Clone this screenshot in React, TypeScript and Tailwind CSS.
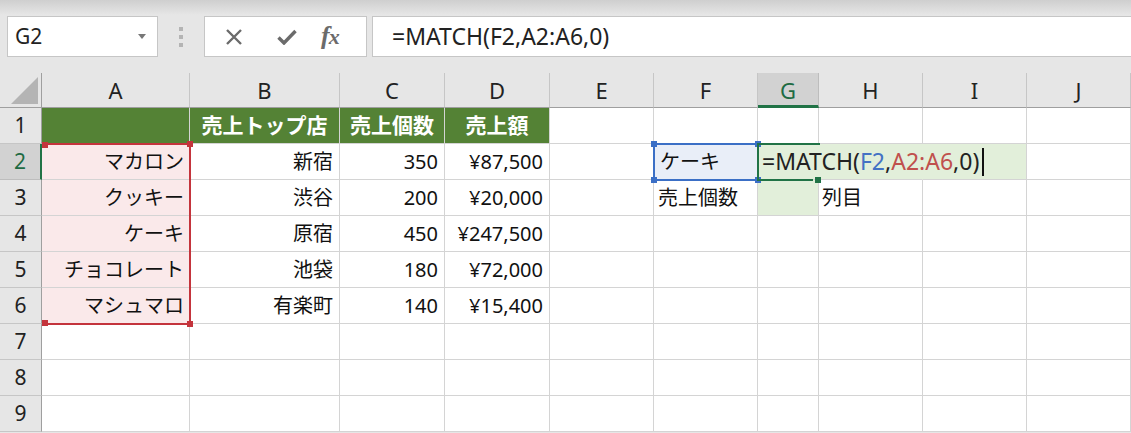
import React from 'react'

const COLS = [
  { l: 'A', w: 148 },
  { l: 'B', w: 150 },
  { l: 'C', w: 105 },
  { l: 'D', w: 105 },
  { l: 'E', w: 104 },
  { l: 'F', w: 104 },
  { l: 'G', w: 61 },
  { l: 'H', w: 104 },
  { l: 'I', w: 104 },
  { l: 'J', w: 104 },
]

const DATA = [
  ['マカロン', '新宿', '350', '¥87,500'],
  ['クッキー', '渋谷', '200', '¥20,000'],
  ['ケーキ', '原宿', '450', '¥247,500'],
  ['チョコレート', '池袋', '180', '¥72,000'],
  ['マシュマロ', '有楽町', '140', '¥15,400'],
]

const font = 'font-["Noto_Sans","Noto_Sans_CJK_JP",sans-serif]'

const Handle = ({ className }: { className: string }) => (
  <span className={`absolute w-[6px] h-[6px] ${className}`} />
)

function FormulaBar() {
  return (
    <div className="flex items-stretch h-[41px] mt-[16px]">
      <div className="ml-[7px] w-[151px] bg-white border border-[#c6c6c6] flex items-center justify-between pl-[7px] pr-[11px]">
        <span className="text-[21px] text-[#222] leading-none">G2</span>
        <svg width="8" height="5" viewBox="0 0 8 5"><path d="M0 0h8L4 5z" fill="#777" /></svg>
      </div>
      <div className="w-[46px] flex flex-col items-center justify-center gap-[4px]">
        <span className="w-[4px] h-[4px] bg-[#b4b4b4]" />
        <span className="w-[4px] h-[4px] bg-[#b4b4b4]" />
        <span className="w-[4px] h-[4px] bg-[#b4b4b4]" />
      </div>
      <div className="w-[163px] bg-white border border-[#c6c6c6] flex items-center">
        <svg className="ml-[20px]" width="18" height="18" viewBox="0 0 18 18">
          <path d="M2 2L16 16M16 2L2 16" stroke="#6b6b6b" strokeWidth="2.4" />
        </svg>
        <svg className="ml-[34px]" width="20" height="16" viewBox="0 0 20 16">
          <path d="M1.5 8.5L7 14L18.5 2" stroke="#6b6b6b" strokeWidth="3.4" fill="none" />
        </svg>
        <span className="ml-[24px] text-[26px] italic font-bold text-[#6b6b6b] font-['Liberation_Serif',serif] leading-none tracking-[-1px] -mt-[2px]">
          f<span className="text-[22px]">x</span>
        </span>
      </div>
      <div className="ml-[5px] flex-1 bg-white border border-[#c6c6c6] border-r-0 flex items-center pl-[19px]">
        <span className="text-[23px] text-[#222] leading-none">=MATCH(F2,A2:A6,0)</span>
      </div>
    </div>
  )
}

function Cell({ children, className = '' }: { children?: React.ReactNode; className?: string }) {
  return (
    <div className={`flex items-center border-r border-b border-[#d4d4d4] text-[20px] text-[#111] whitespace-nowrap ${className}`}>
      {children}
    </div>
  )
}

function Sheet() {
  const rows = []
  for (let r = 1; r <= 9; r++) {
    const sel = r === 2
    rows.push(
      <div
        key={`h${r}`}
        className={`flex items-center justify-center border-b text-[21px] ${
          sel
            ? 'bg-[#d2d2d2] text-[#1e6b43] border-r-2 border-r-[#217346] border-b-[#bdbdbd]'
            : 'bg-[#e6e6e6] text-[#222] border-r border-r-[#9f9f9f] border-b-[#c6c6c6]'
        }`}
      >
        {r}
      </div>
    )
    COLS.forEach((c, ci) => {
      const key = `${c.l}${r}`
      if (r === 1) {
        if (ci === 0) rows.push(<Cell key={key} className="bg-[#548235] border-[#548235]" />)
        else if (ci <= 3) {
          const t = ['売上トップ店', '売上個数', '売上額'][ci - 1]
          rows.push(
            <Cell key={key} className="bg-[#548235] border-[#548235] justify-center font-bold text-white text-[21px]">
              {t}
            </Cell>
          )
        } else rows.push(<Cell key={key} className="bg-white" />)
        return
      }
      if (r >= 2 && r <= 6 && ci <= 3) {
        const v = DATA[r - 2][ci]
        rows.push(
          <Cell key={key} className={`justify-end ${ci === 0 ? 'bg-[#fae9ea] pr-[5px]' : 'bg-white pr-[6px]'} ${ci === 3 ? 'pr-[4px]' : ''}`}>
            {v}
          </Cell>
        )
        return
      }
      if (key === 'F2') {
        rows.push(<Cell key={key} className="bg-[#e9eef8] pl-[6px]">ケーキ</Cell>)
        return
      }
      if (key === 'F3') {
        rows.push(<Cell key={key} className="bg-white pl-[4px]">売上個数</Cell>)
        return
      }
      if (key === 'G2') {
        rows.push(
          <Cell key={key} className="bg-[#e2efda] border-r-[#e2efda] overflow-visible relative z-10 pl-[4px]">
            <span className="text-[23px] text-[#222] flex items-center">
              =MATCH(<span className="text-[#4472c4]">F2</span>,<span className="text-[#c0504d]">A2:A6</span>,0)
              <span className="ml-[3px] w-[1.5px] h-[28px] bg-[#111]" />
            </span>
          </Cell>
        )
        return
      }
      if (key === 'H2') {
        rows.push(<Cell key={key} className="bg-[#e2efda] border-r-[#e2efda]" />)
        return
      }
      if (key === 'I2') {
        rows.push(<Cell key={key} className="bg-[#e2efda]" />)
        return
      }
      if (key === 'G3') {
        rows.push(<Cell key={key} className="bg-[#e2efda]" />)
        return
      }
      if (key === 'H3') {
        rows.push(<Cell key={key} className="bg-white pl-[3px]">列目</Cell>)
        return
      }
      rows.push(<Cell key={key} className="bg-white" />)
    })
  }

  return (
    <div className="relative mt-[16px] grid grid-cols-[42px_148px_150px_105px_105px_104px_104px_61px_104px_104px_104px] grid-rows-[35px_repeat(9,36px)]">
      <div className="bg-[#e6e6e6] border-r border-r-[#9f9f9f] border-b border-b-[#9f9f9f] flex items-end justify-end pr-[3px] pb-[3px]">
        <svg width="27" height="27" viewBox="0 0 27 27"><path d="M27 0V27H0z" fill="#b4b4b4" /></svg>
      </div>
      {COLS.map((c) =>
        c.l === 'G' ? (
          <div key={c.l} className="bg-[#d2d2d2] border-r border-r-[#bdbdbd] border-b-[3px] border-b-[#217346] flex items-center justify-center text-[22px] text-[#1e6b43] pt-[2px]">
            {c.l}
          </div>
        ) : (
          <div key={c.l} className="bg-[#e6e6e6] border-r border-r-[#c6c6c6] border-b border-b-[#9f9f9f] flex items-center justify-center text-[22px] text-[#222] pt-[1px]">
            {c.l}
          </div>
        )
      )}
      {rows}

      {/* A2:A6 reference range */}
      <div className="absolute left-[42px] top-[70px] w-[149px] h-[182px] border-2 border-l-0 border-[#c4343c] pointer-events-none">
        <Handle className="left-[0px] top-[-3px] w-[4px] bg-[#c4343c]" />
        <Handle className="right-[-4px] top-[-4px] bg-[#c4343c]" />
        <Handle className="left-[0px] bottom-[-3px] w-[4px] bg-[#c4343c]" />
        <Handle className="right-[-4px] bottom-[-4px] bg-[#c4343c]" />
      </div>

      {/* F2 reference */}
      <div className="absolute left-[653px] top-[70px] w-[106px] h-[38px] border-2 border-[#3b6fc6] pointer-events-none z-20">
        <Handle className="left-[-4px] top-[-4px] bg-[#3b6fc6]" />
        <Handle className="right-[-4px] top-[-4px] bg-[#3b6fc6]" />
        <Handle className="left-[-4px] bottom-[-4px] bg-[#3b6fc6]" />
        <Handle className="right-[-4px] bottom-[-4px] bg-[#3b6fc6]" />
      </div>

      {/* G2 active cell */}
      <div className="absolute left-[757px] top-[70px] w-[63px] h-[2px] bg-[#217346] z-20" />
      <div className="absolute left-[757px] top-[70px] w-[2px] h-[38px] bg-[#217346] z-20" />
      <div className="absolute left-[757px] top-[106px] w-[56px] h-[2px] bg-[#217346] z-20" />
      <div className="absolute left-[815px] top-[104px] w-[6px] h-[6px] bg-[#217346] z-20" />
    </div>
  )
}

export default function App() {
  return (
    <div className={`w-[1131px] h-[433px] overflow-hidden bg-[#e6e6e6] ${font}`}>
      <div className="h-0">
        <div className="h-[15px] bg-gradient-to-b from-[#cfcfcf] to-[#e6e6e6]" />
      </div>
      <FormulaBar />
      <Sheet />
    </div>
  )
}
